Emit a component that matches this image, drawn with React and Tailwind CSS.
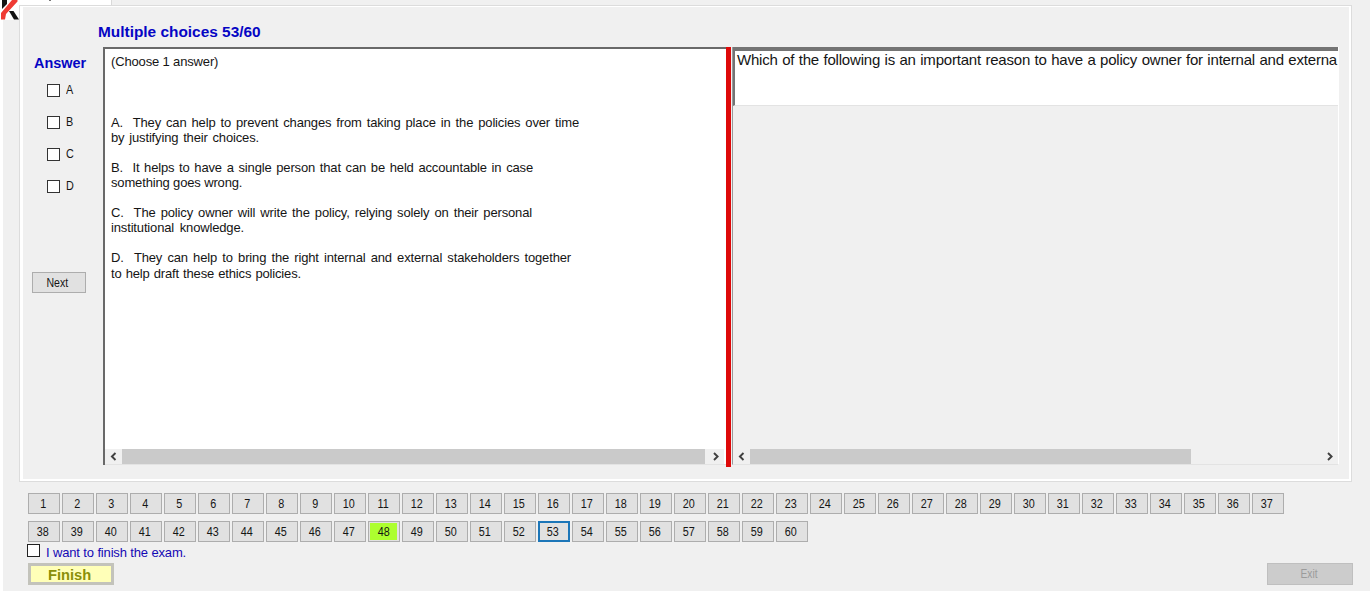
import React from "react";

const answers = ["A", "B", "C", "D"];
const numbers = Array.from({ length: 60 }, (_, i) => i + 1);

const choices = [
  { first: "A.\u00a0 They can help to prevent changes from taking place in the policies over time", w: "w-[468px]", second: "by justifying their choices.", w2: "w-[148px]" },
  { first: "B.\u00a0 It helps to have a single person that can be held accountable in case", w: "w-[422px]", second: "something goes wrong.", w2: "w-[131px]" },
  { first: "C.\u00a0 The policy owner will write the policy, relying solely on their personal", w: "w-[421px]", second: "institutional knowledge.", w2: "w-[133px]" },
  { first: "D.\u00a0 They can help to bring the right internal and external stakeholders together", w: "w-[460px]", second: "to help draft these ethics policies.", w2: "w-[190px] pt-px" },
];

function Arrow({ right }) {
  return (
    <svg className="h-[15px] w-[17px] shrink-0" viewBox="0 0 17 15" fill="none" stroke="#404040" strokeWidth="1.9">
      <path d={right ? "M7 4l3.6 3.5L7 11" : "M10.5 4L6.9 7.5l3.6 3.5"} />
    </svg>
  );
}

function Scrollbar({ thumb, size }) {
  return (
    <div className={`flex h-[15px] shrink-0 items-stretch bg-[#f0f0f0] ${size}`}>
      <Arrow />
      <div className={`bg-[#cacaca] ${thumb}`} />
      <div className="grow" />
      <Arrow right />
    </div>
  );
}

function Line({ text, width }) {
  return <p className={`whitespace-nowrap [text-align-last:justify] ${width}`}>{text}</p>;
}

function NumberButton({ n }) {
  const state =
    n === 53
      ? "border-2 border-[#1c76b8] bg-[#e1e1e1]"
      : "border border-[#adadad] bg-[#e1e1e1]";
  return (
    <button className={`flex h-[21px] w-8 items-center justify-center p-0 pr-[2px] ${state}`}>
      {n === 48 ? (
        <span className="ml-[1px] flex h-[17px] w-[27px] items-center justify-center bg-[#adff2f] pt-[2px]"><span className="inline-block scale-x-[0.9]">{n}</span></span>
      ) : (
        <span className="mt-[2px] inline-block scale-x-[0.9]">{n}</span>
      )}
    </button>
  );
}

export default function App() {
  return (
    <div className="h-[594px] w-[1372px] overflow-hidden bg-white pb-[3px] pl-[3px] pr-[2px] font-['Liberation_Sans',Arial,sans-serif] text-[12px] leading-[15px] text-[#151515]">
      <div className="flex h-[591px] w-[1367px] flex-col bg-[#f0f0f0]">
        <div className="flex h-[5px] shrink-0">
          <div className="-ml-[3px] h-[20px] w-[19px] shrink-0 bg-white">
            <svg className="h-[20px] w-[19px]" viewBox="0 0 19 20">
              <path d="M2 0h5v4L2 9z" fill="#141414" />
              <path d="M9 11h4.500l5.500 8.500h-5z" fill="#141414" />
              <path d="M12 0h5.500v1.500L6 14l-1 5.500H1V13z" fill="#ef3b34" />
            </svg>
          </div>
          <div className="h-[7px] w-[92px] bg-white">
            <div className="ml-[30px] h-px w-[2px] bg-[#777]" />
          </div>
          <div className="h-[5px] w-px bg-[#d9d9d9]" />
        </div>

        <main className="ml-4 flex h-[477px] w-[1333px] shrink-0 flex-col border border-[#dcdcdc] p-0">
          <div className="flex grow flex-col border-b-2 border-l-[3px] border-r-2 border-t border-white">
            <h1 className="ml-[75px] mt-[17px] h-[17px] w-[163px] whitespace-nowrap text-[14px] font-bold leading-[17px] text-[#0505c4]">
              <span className="inline-block origin-left scale-x-[1.1]">Multiple choices 53/60</span>
            </h1>
            <div className="mt-[6px] flex h-[420px]">
              <aside className="flex w-[80px] shrink-0 flex-col">
                <h2 className="ml-[11px] mt-[8px] whitespace-nowrap text-[14px] font-bold leading-[17px] text-[#0505c4]"><span className="inline-block origin-left scale-x-[1.03]">Answer</span></h2>
                <div className="ml-6 mt-[12px] flex flex-col gap-[19px]">
                  {answers.map((a) => (
                    <label key={a} className="flex h-[13px] items-center">
                      <span className="h-[13px] w-[13px] border border-[#333] bg-white" />
                      <span className="ml-[6px] inline-block origin-left scale-x-[0.9]">{a}</span>
                    </label>
                  ))}
                </div>
                <button className="ml-[9px] mt-[79px] h-[21px] w-[54px] border border-[#adadad] bg-[#e1e1e1] pr-[3px] pt-px">
                  <span className="inline-block scale-x-[0.88]">Next</span>
                </button>
              </aside>

              <section className="flex h-[418px] w-[623px] shrink-0 flex-col border-l-2 border-t-2 border-[#696969] bg-white">
                <div className="grow pl-[6px] pt-[5px] text-[13px] tracking-[-0.15px]">
                  <Line text="(Choose 1 answer)" width="w-[106px]" />
                  <div className="mt-[46px] flex flex-col gap-[15px]">
                    {choices.map((c) => (
                      <div key={c.first}>
                        <Line text={c.first} width={c.w} />
                        <Line text={c.second} width={c.w2} />
                      </div>
                    ))}
                  </div>
                </div>
                <Scrollbar size="w-[619px]" thumb="w-[583px]" />
                <div className="h-px shrink-0 bg-[#e3e3e3]" />
              </section>

              <div className="h-[420px] w-[5px] shrink-0 bg-[#de0909]" />

              <section className="ml-[1px] flex h-[418px] w-[607px] shrink-0 flex-col border-b border-l border-r border-b-[#e3e3e3] border-l-[#9a9a9a] border-r-white">
                <div className="h-[59px] shrink-0 overflow-hidden border-b border-l-2 border-t-4 border-b-[#e3e3e3] border-l-[#747474] border-t-[#747474] bg-white pl-[2px] text-[15px] leading-[18px] tracking-[-0.2px]">
                  <p className="w-[600px] whitespace-nowrap [text-align-last:justify]">Which of the following is an important reason to have a policy owner for internal and externa</p>
                </div>
                <div className="grow" />
                <Scrollbar size="w-full" thumb="w-[441px]" />
              </section>
            </div>
          </div>
        </main>

        <nav className="ml-[25px] mt-[11px] flex w-[1260px] shrink-0 flex-wrap gap-x-[2px] gap-y-[7px]">
          {numbers.map((n) => <NumberButton key={n} n={n} />)}
        </nav>

        <footer className="ml-6 mt-[2px] flex w-[1326px] shrink-0 flex-col">
          <label className="flex h-[19px] items-start text-[13px] text-[#1408b4]">
            <span className="h-[13px] w-[13px] border border-[#222] bg-white" />
            <span className="ml-[6px] mt-[1px] w-[140px] whitespace-nowrap tracking-[-0.17px] [text-align-last:justify]">I want to finish the exam.</span>
          </label>
          <div className="ml-px flex justify-between">
            <button className="h-[22px] w-[86px] border-[3px] border-[#c3c3bb] bg-[#ffffb8] pr-[3px] pt-[2px] text-[14px] font-bold leading-[14px] text-[#8a8f08]"><span className="inline-block scale-x-[1.05]">Finish</span></button>
            <button className="h-[22px] w-[86px] border border-[#bfbfbf] bg-[#cccccc] pr-[2px] text-[#9b9b9b]"><span className="inline-block scale-x-[0.85]">Exit</span></button>
          </div>
        </footer>
      </div>
    </div>
  );
}
